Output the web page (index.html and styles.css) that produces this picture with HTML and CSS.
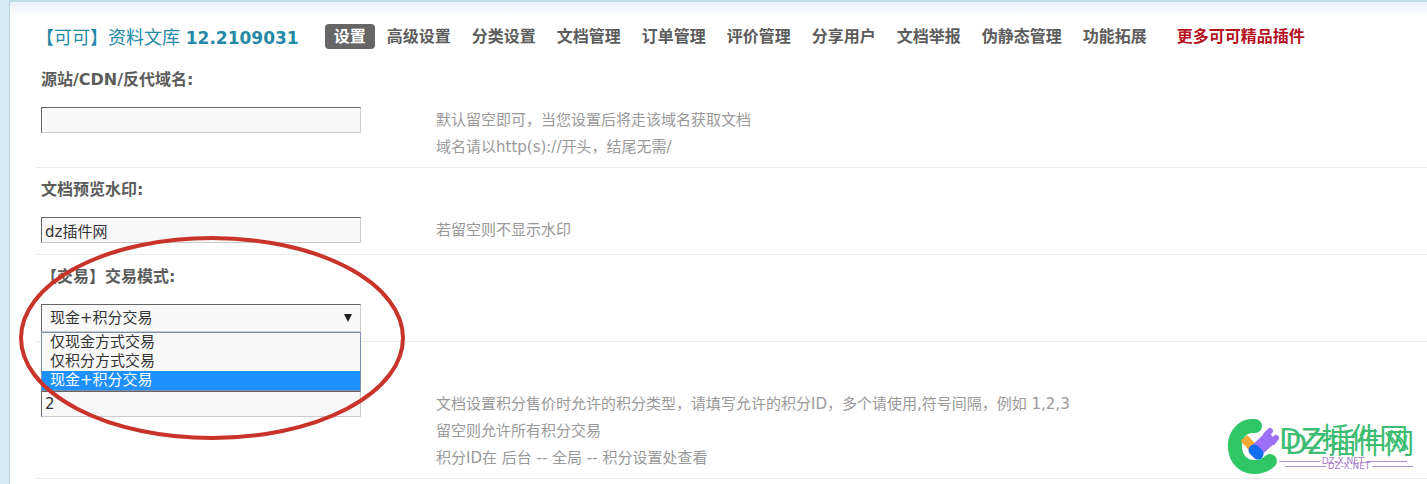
FILE: index.html
```
<!DOCTYPE html>
<html lang="zh-CN">
  <head>
    <meta charset="UTF-8" />
    <meta name="viewport" content="width=device-width, initial-scale=1.0" />
    <title>资料文库</title>
    <link rel="stylesheet" href="styles.css">
  </head>
  <body>
    <div class="main">
      <div class="header">
        <h1 class="title">【可可】资料文库 <span class="version">12.2109031</span></h1>
        <nav class="tabs">
          <a href="#" class="tab current">设置</a>
          <a href="#" class="tab">高级设置</a>
          <a href="#" class="tab">分类设置</a>
          <a href="#" class="tab">文档管理</a>
          <a href="#" class="tab">订单管理</a>
          <a href="#" class="tab">评价管理</a>
          <a href="#" class="tab">分享用户</a>
          <a href="#" class="tab">文档举报</a>
          <a href="#" class="tab">伪静态管理</a>
          <a href="#" class="tab">功能拓展</a>
          <a href="#" class="tab more">更多可可精品插件</a>
        </nav>
      </div>
      <form class="settings">
        <div class="row">
          <label class="name" for="cdn">源站/CDN/反代域名:</label>
          <div class="control"><input type="text" id="cdn" class="txt" /></div>
          <p class="tips">默认留空即可，当您设置后将走该域名获取文档<br />域名请以http(s)://开头，结尾无需/</p>
        </div>
        <div class="row">
          <label class="name" for="watermark">文档预览水印:</label>
          <div class="control"><input type="text" id="watermark" class="txt" value="dz插件网" /></div>
          <p class="tips">若留空则不显示水印</p>
        </div>
        <div class="row">
          <label class="name" for="mode">【交易】交易模式:</label>
          <div class="control">
            <div class="dropdown">
              <select id="mode" class="txt select">
                <option>仅现金方式交易</option>
                <option>仅积分方式交易</option>
                <option selected>现金+积分交易</option>
              </select>
              <svg class="arrow" viewBox="0 0 8 8"><path d="M0 0h8L4 8z" fill="#222" /></svg>
              <ul class="options">
                <li>仅现金方式交易</li>
                <li>仅积分方式交易</li>
                <li class="selected">现金+积分交易</li>
              </ul>
              <svg class="circle" viewBox="0 0 390 208">
                <ellipse cx="195" cy="104" rx="191" ry="100" fill="none" stroke="#c9342a" stroke-width="4" />
              </svg>
            </div>
          </div>
        </div>
        <div class="row">
          <div class="name"></div>
          <div class="control"><input type="text" id="credit" class="txt" value="2" aria-label="积分类型" /></div>
          <p class="tips">文档设置积分售价时允许的积分类型，请填写允许的积分ID，多个请使用,符号间隔，例如 1,2,3<br />留空则允许所有积分交易<br />积分ID在 后台 -- 全局 -- 积分设置处查看</p>
        </div>
      </form>
    </div>
    <div class="logo">
      <svg class="mark" viewBox="0 0 53 58">
        <path d="M25 8C14 9 8 20 9 30C10 42 18 49 28 49C35 49 40 47 44 43M25 8L29 8" fill="none" stroke="#2fc765" stroke-width="14" stroke-linecap="round" stroke-linejoin="round" />
        <path d="M18 20l10 11" stroke="#f9a833" stroke-width="9" />
        <path d="M31 32L46 18" stroke="#9c70f5" stroke-width="14" />
        <path d="M40 17L44 13M47 24L50 20" stroke="#9c70f5" stroke-width="6" stroke-linecap="round" />
        <path d="M28 32l4 4" stroke="#126df0" stroke-width="11" stroke-linecap="round" />
      </svg>
      <div class="words">
        <span class="brand">DZ插件网</span>
        <span class="site">DZ-X.NET</span>
      </div>
      <!-- second layer of the wordmark, shifted for the double-line look -->
      <div class="words shadow" aria-hidden="true">
        <span class="brand">DZ插件网</span>
        <span class="site">DZ-X.NET</span>
      </div>
    </div>
  </body>
</html>
```

FILE: styles.css
```
* {
  box-sizing: border-box;
}
body {
  margin: 0;
  min-height: 100vh;
  background: #d9ebf6;
  padding-left: 9px;
  position: relative;
  overflow: hidden;
  font: 15px "DejaVu Sans", "Noto Sans CJK SC", sans-serif;
  color: #333;
}
.main {
  min-height: 100vh;
  border-left: 1px solid #b4d2e4;
  border-top: 2px solid #c0dde3;
  background: #fff linear-gradient(#e6f1f8, #fff 14px);
  padding: 18px 0 0 26px;
}
.header {
  display: flex;
  align-items: center;
  gap: 26px;
  height: 32px;
  white-space: nowrap;
}
.title {
  margin: 0;
  font-size: 18px;
  font-weight: 400;
  color: #2389a5;
}
.version {
  font-size: 17px;
  font-weight: 700;
}
.tabs {
  display: flex;
  gap: 3px;
}
.tab {
  padding: 0 9px;
  border-radius: 4px;
  font-size: 16px;
  font-weight: 700;
  line-height: 25px;
  color: #5c5c5c;
  text-decoration: none;
}
.current {
  background: #666;
  color: #fff;
}
.more {
  margin-left: 9px;
  color: #b5121f;
}
.settings {
  padding-top: 6px;
}
.row {
  display: grid;
  grid-template-columns: 395px 1fr;
  padding: 7px 0 6px 5px;
  border-bottom: 1px solid #e6edef;
}
.name {
  grid-column: 1 / 3;
  height: 42px;
  font-size: 16px;
  font-weight: 700;
  line-height: 30px;
  color: #5c5c5c;
}
.control {
  height: 31px;
}
.txt {
  display: block;
  width: 320px;
  height: 26px;
  padding: 0 3px;
  border: 1px solid;
  border-color: #666 #ccc #ccc #666;
  border-radius: 0;
  background: #f9f9f9;
  font: inherit;
  color: #333;
}
.tips {
  margin: 0;
  line-height: 27px;
  color: #999;
}
.dropdown {
  position: relative;
  width: 320px;
}
.select {
  height: 28px;
  padding: 0 8px;
  appearance: none;
}
.arrow {
  position: absolute;
  right: 9px;
  top: 10px;
  width: 8px;
  height: 8px;
}
.options {
  position: absolute;
  left: 0;
  top: 100%;
  width: 100%;
  margin: 0;
  padding: 0;
  border: 1px solid #7d8fae;
  background: #f9f9f9;
  list-style: none;
}
.options li {
  padding: 0 8px;
  line-height: 19px;
}
.options .selected {
  background: #1e90ff;
  color: #fff;
}
.circle {
  position: absolute;
  left: -24px;
  top: -70px;
  width: 390px;
  height: 208px;
  pointer-events: none;
}
.logo {
  position: absolute;
  right: 14px;
  bottom: 8px;
  display: flex;
  padding-right: 6px;
}
.mark {
  width: 53px;
  height: 58px;
}
.words {
  width: 128px;
  padding-top: 4px;
  white-space: nowrap;
}
.shadow {
  position: absolute;
  right: 0;
  top: 5px;
}
.brand {
  display: block;
  font-size: 29px;
  line-height: 34px;
  color: #3dbd72;
}
.site {
  display: flex;
  align-items: center;
  gap: 2px;
  font-size: 9px;
  line-height: 10px;
  color: #a77fd0;
}
.site::before,
.site::after {
  content: "";
  flex: 1;
  border-top: 1px solid #b08fd0;
}
```
